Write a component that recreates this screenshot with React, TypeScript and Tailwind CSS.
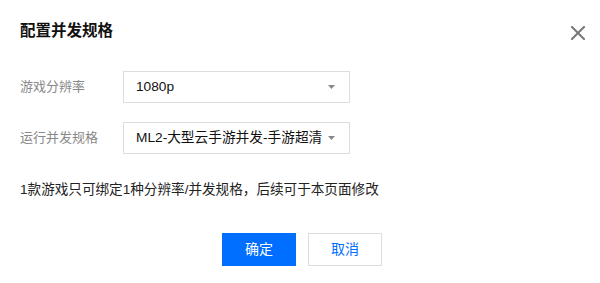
import React from "react";

const font = { fontFamily: '"Liberation Sans", "Noto Sans CJK SC", sans-serif' };

function Caret() {
  return (
    <svg width="7" height="4" viewBox="0 0 7 4" className="shrink-0">
      <path d="M0 0 L7 0 L3.5 4 Z" fill="#888888" />
    </svg>
  );
}

function Select({ value }: { value: string }) {
  return (
    <div className="flex h-[32px] w-[227px] items-center justify-between gap-[4px] border border-[#dddddd] bg-white pl-[12px] pr-[14px]">
      <span className="text-[13.7px] leading-[20px] text-[#111111] whitespace-nowrap">{value}</span>
      <Caret />
    </div>
  );
}

function Row({ label, value, className }: { label: string; value: string; className?: string }) {
  return (
    <div className={"flex items-center " + (className ?? "")}>
      <div className="w-[103px] text-[13px] leading-[20px] text-[#888888]">{label}</div>
      <Select value={value} />
    </div>
  );
}

export default function App() {
  return (
    <div className="relative h-[283px] w-[600px] overflow-hidden bg-white" style={font}>
      <div className="flex items-center justify-between pl-[20px] pr-[15px] pt-[19px]">
        <div className="text-[15.5px] font-bold leading-[24px] text-[#111111]">配置并发规格</div>
        <svg width="14" height="14" viewBox="0 0 14 14" className="mt-[4px]">
          <path d="M1 1 L13 13 M13 1 L1 13" stroke="#777777" strokeWidth="2" strokeLinecap="square" />
        </svg>
      </div>
      <div className="px-[20px] pt-[28px]">
        <Row label="游戏分辨率" value="1080p" />
        <Row label="运行并发规格" value="ML2-大型云手游并发-手游超清" className="mt-[19px]" />
        <div className="mt-[26px] text-[13.6px] leading-[20px] text-[#222222]">
          1款游戏只可绑定1种分辨率/并发规格，后续可于本页面修改
        </div>
      </div>
      <div className="mt-[33px] flex justify-center gap-[12px] pl-[4px]">
        <button className="h-[33px] w-[74px] bg-[#006eff] text-[14px] text-white">确定</button>
        <button className="h-[33px] w-[74px] border border-[#dddddd] bg-white text-[14px] text-[#006eff]">取消</button>
      </div>
    </div>
  );
}
